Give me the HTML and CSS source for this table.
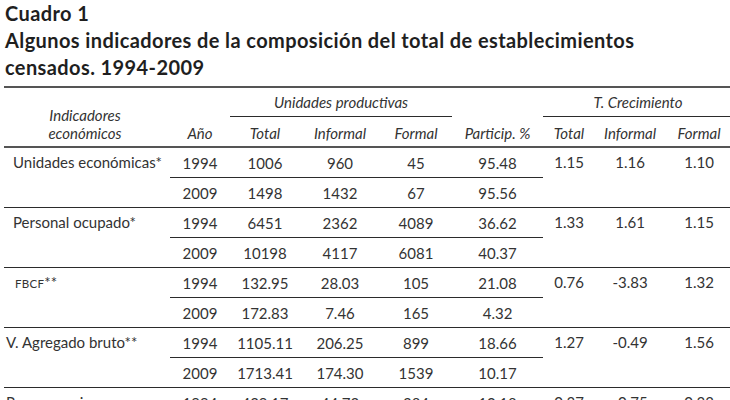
FILE: index.html
```html
<!DOCTYPE html>
<html lang="es">
<head>
<meta charset="utf-8">
<title>Cuadro 1</title>
<link rel="stylesheet" href="styles.css">
</head>
<body>
<div class="page">
  <h1 class="title">Cuadro 1<br>Algunos indicadores de la composición del total de establecimientos<br>censados. 1994-2009</h1>
  <table class="tbl">
    <colgroup>
      <col class="c-lab"><col class="c-year"><col class="c-tot"><col class="c-inf"><col class="c-for"><col class="c-par"><col class="c-ttot"><col class="c-tinf"><col class="c-tfor">
    </colgroup>
    <thead>
      <tr class="h1">
        <th rowspan="2" class="hlab">Indicadores<br>económicos</th>
        <th rowspan="2" class="hbot">Año</th>
        <th colspan="3" class="span">Unidades productivas</th>
        <th rowspan="2" class="hbot">Particip. %</th>
        <th colspan="3" class="span">T. Crecimiento</th>
      </tr>
      <tr class="h2">
        <th>Total</th><th>Informal</th><th>Formal</th>
        <th>Total</th><th>Informal</th><th>Formal</th>
      </tr>
    </thead>
    <tbody>
      <tr class="r1">
        <td rowspan="2" class="lab in">Unidades económicas*</td>
        <td>1994</td><td>1006</td><td>960</td><td>45</td><td>95.48</td>
        <td rowspan="2" class="tg">1.15</td><td rowspan="2" class="tg">1.16</td><td rowspan="2" class="tg">1.10</td>
      </tr>
      <tr class="r2"><td>2009</td><td>1498</td><td>1432</td><td>67</td><td>95.56</td></tr>

      <tr class="r1">
        <td rowspan="2" class="lab in">Personal ocupado*</td>
        <td>1994</td><td>6451</td><td>2362</td><td>4089</td><td>36.62</td>
        <td rowspan="2" class="tg">1.33</td><td rowspan="2" class="tg">1.61</td><td rowspan="2" class="tg">1.15</td>
      </tr>
      <tr class="r2"><td>2009</td><td>10198</td><td>4117</td><td>6081</td><td>40.37</td></tr>

      <tr class="r1">
        <td rowspan="2" class="lab in2"><span class="sc">FBCF</span>**</td>
        <td>1994</td><td>132.95</td><td>28.03</td><td>105</td><td>21.08</td>
        <td rowspan="2" class="tg">0.76</td><td rowspan="2" class="tg">-3.83</td><td rowspan="2" class="tg">1.32</td>
      </tr>
      <tr class="r2"><td>2009</td><td>172.83</td><td>7.46</td><td>165</td><td>4.32</td></tr>

      <tr class="r1">
        <td rowspan="2" class="lab">V. Agregado bruto**</td>
        <td>1994</td><td>1105.11</td><td>206.25</td><td>899</td><td>18.66</td>
        <td rowspan="2" class="tg">1.27</td><td rowspan="2" class="tg">-0.49</td><td rowspan="2" class="tg">1.56</td>
      </tr>
      <tr class="r2"><td>2009</td><td>1713.41</td><td>174.30</td><td>1539</td><td>10.17</td></tr>

      <tr class="r1">
        <td class="lab">Remuneraciones</td>
        <td>1994</td><td>429.17</td><td>44.72</td><td>384</td><td>10.18</td>
        <td class="tg">0.37</td><td class="tg">-0.75</td><td class="tg">0.33</td>
      </tr>
    </tbody>
  </table>
</div>
</body>
</html>
```
FILE: styles.css
```css
html, body {
  margin: 0;
  padding: 0;
  background: #ffffff;
}
body {
  font-family: Lato, "Open Sans", sans-serif;
  color: #333333;
  overflow: hidden;
}
.page {
  width: 730px;
  padding: 0 0 0 4px;
  box-sizing: border-box;
}
.title {
  margin: 0 0 5px 1px;
  font-size: 20px;
  letter-spacing: 0.4px;
  line-height: 27px;
  font-weight: 700;
  color: #1f1f1f;
}
.tbl {
  border-collapse: collapse;
  width: 729px;
  table-layout: fixed;
  font-size: 15px;
  border-top: 2px solid #555;
}
.c-lab { width: 166px; }
.c-year { width: 60px; }
.c-tot { width: 70px; }
.c-inf { width: 80px; }
.c-for { width: 72px; }
.c-par { width: 91px; }
.c-ttot { width: 52px; }
.c-tinf { width: 70px; }
.c-tfor { width: 68px; }

th {
  font-weight: 400;
  font-style: italic;
  text-align: center;
  padding: 0;
}
thead tr.h1 th { height: 28px; }
thead tr.h2 th { height: 27px; border-bottom: 2px solid #555; padding-top: 2px; }
th.span { border-bottom: 1px solid #2b2b2b; }
th.hlab, th.hbot {
  vertical-align: bottom;
  border-bottom: 2px solid #555;
  padding-bottom: 4px;
}
th.hlab { line-height: 18px; padding-right: 4px; }

td {
  text-align: center;
  padding: 0;
  height: 29px;
}
tr.r1 td { border-bottom: 1px solid #2b2b2b; }
tr.r2 td { border-bottom: 1px solid #2b2b2b; }
td.lab, td.tg {
  vertical-align: top;
  padding-top: 5px;
  height: auto;
}
td.lab { text-align: left; padding-left: 2px; }
td.lab.in { padding-left: 9px; }
td.lab.in2 { padding-left: 11px; }
.sc { font-size: 11.5px; letter-spacing: 0.3px; }
```
